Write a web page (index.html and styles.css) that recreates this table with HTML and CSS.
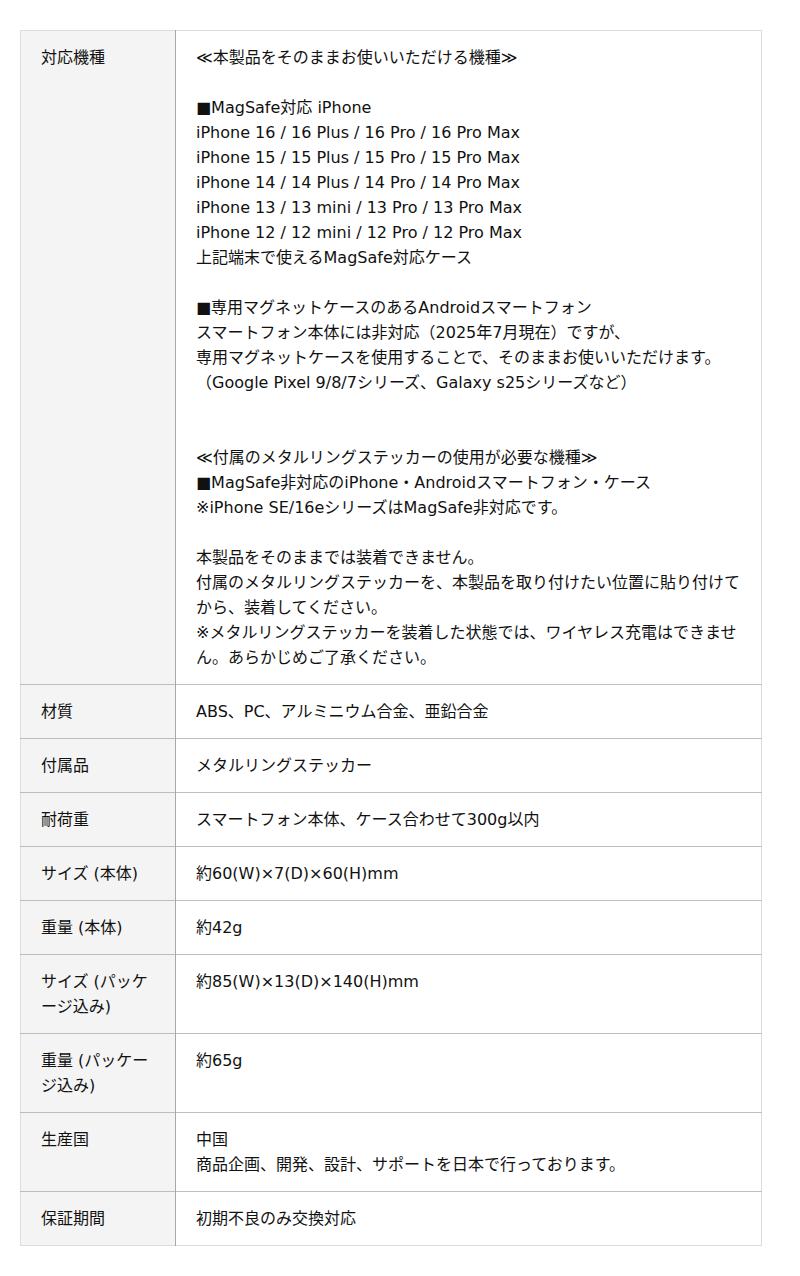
FILE: index.html
```html
<!DOCTYPE html>
<html lang="ja">

<head>
  <meta charset="UTF-8">
  <meta name="viewport" content="width=device-width, initial-scale=1.0">
  <title>商品仕様</title>
  <link rel="stylesheet" href="styles.css">
</head>

<body>
  <!-- 仕様表 -->
  <div class="spec">
    <table class="spec-table">
      <colgroup>
        <col class="col-label">
        <col>
      </colgroup>
      <tr>
        <th>対応機種</th>
        <td>
          ≪本製品をそのままお使いいただける機種≫<br>
          <br>
          ■MagSafe対応 iPhone<br>
          iPhone 16 / 16 Plus / 16 Pro / 16 Pro Max<br>
          iPhone 15 / 15 Plus / 15 Pro / 15 Pro Max<br>
          iPhone 14 / 14 Plus / 14 Pro / 14 Pro Max<br>
          iPhone 13 / 13 mini / 13 Pro / 13 Pro Max<br>
          iPhone 12 / 12 mini / 12 Pro / 12 Pro Max<br>
          上記端末で使えるMagSafe対応ケース<br>
          <br>
          ■専用マグネットケースのあるAndroidスマートフォン<br>
          スマートフォン本体には非対応（2025年7月現在）ですが、<br>
          専用マグネットケースを使用することで、そのままお使いいただけます。<br>
          （Google Pixel 9/8/7シリーズ、Galaxy s25シリーズなど）<br>
          <br>
          <br>
          ≪付属のメタルリングステッカーの使用が必要な機種≫<br>
          ■MagSafe非対応のiPhone・Androidスマートフォン・ケース<br>
          ※iPhone SE/16eシリーズはMagSafe非対応です。<br>
          <br>
          本製品をそのままでは装着できません。<br>
          付属のメタルリングステッカーを、本製品を取り付けたい位置に貼り付けてから、装着してください。<br>
          ※メタルリングステッカーを装着した状態では、ワイヤレス充電はできません。あらかじめご了承ください。
        </td>
      </tr>
      <tr>
        <th>材質</th>
        <td>ABS、PC、アルミニウム合金、亜鉛合金</td>
      </tr>
      <tr>
        <th>付属品</th>
        <td>メタルリングステッカー</td>
      </tr>
      <tr>
        <th>耐荷重</th>
        <td>スマートフォン本体、ケース合わせて300g以内</td>
      </tr>
      <tr>
        <th>サイズ (本体)</th>
        <td>約60(W)×7(D)×60(H)mm</td>
      </tr>
      <tr>
        <th>重量 (本体)</th>
        <td>約42g</td>
      </tr>
      <tr>
        <th>サイズ (パッケージ込み)</th>
        <td>約85(W)×13(D)×140(H)mm</td>
      </tr>
      <tr>
        <th>重量 (パッケージ込み)</th>
        <td>約65g</td>
      </tr>
      <tr>
        <th>生産国</th>
        <td>中国<br>商品企画、開発、設計、サポートを日本で行っております。</td>
      </tr>
      <tr>
        <th>保証期間</th>
        <td>初期不良のみ交換対応</td>
      </tr>
    </table>
  </div>
</body>

</html>
```

FILE: styles.css
```css
* {
  margin: 0;
  padding: 0;
}

body {
  background: #fff;
  color: #111;
  font-family: "DejaVu Sans", "Noto Sans CJK JP", sans-serif;
  font-size: 16px;
  line-height: 25px;
}

/* 仕様表の外枠 */
.spec {
  padding: 30px 20px;
}

.spec-table {
  width: 742px;
  table-layout: fixed;
  border-collapse: collapse;
  border: 1px solid #dcdcdc;
}

.col-label {
  width: 155px;
}

.spec-table th,
.spec-table td {
  padding: 14px 20px;
  text-align: left;
  vertical-align: top;
  font-weight: normal;
}

/* 見出し列 */
.spec-table th {
  background: #f4f4f4;
  border-right: 1px solid #a8a8a8;
}

/* 行の区切り */
.spec-table tr + tr th,
.spec-table tr + tr td {
  border-top: 1px solid #bdbdbd;
}
```
